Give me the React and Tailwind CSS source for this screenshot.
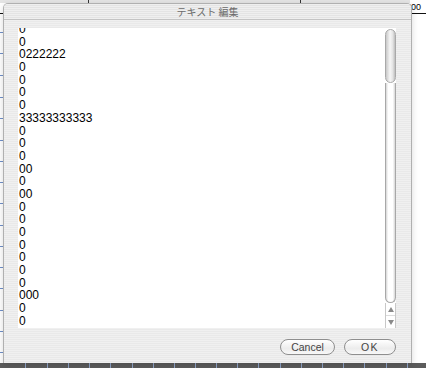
import React from "react";

const lines = [
  "0", "0", "0222222", "0", "0", "0", "0", "33333333333", "0", "0", "0", "00", "0", "00",
  "0", "0", "0", "0", "0", "0", "0", "000", "0", "0",
];

const leftTicks = [32, 53, 75, 97, 118, 140, 161, 182, 203, 225, 246, 267, 288, 310, 331, 352];
const bottomTicks = [25, 47, 68, 89, 110, 132, 153, 174, 195, 216, 237, 258, 280, 301, 322, 343, 364, 386, 407];

export default function App() {
  return (
    <div className="relative w-[426px] h-[368px] overflow-hidden bg-white font-['Liberation_Sans',sans-serif]">
      {/* background canvas */}
      <div className="absolute left-0 top-0 w-[410px] h-[3px] bg-[#e4e4e4]" />
      <div className="absolute left-[88px] top-0 w-[1px] h-[3px] bg-[#333]" />
      <div className="absolute left-[300px] top-0 w-[1px] h-[3px] bg-[#333]" />
      <div className="absolute left-0 top-[13px] w-[426px] h-[1px] bg-[#111]" />
      <div className="absolute left-[411px] top-[2px] text-[9px] leading-[10px] text-black">00</div>
      {leftTicks.map((y) => (
        <div key={y} className="absolute left-0 w-[3px] h-[1px] bg-[#6f8fc8]" style={{ top: y }} />
      ))}
      <div className="absolute left-0 top-[363px] w-[426px] h-[5px] bg-[#5c5c5c]" />
      {bottomTicks.map((x) => (
        <div key={x} className="absolute top-[363px] w-[1px] h-[5px] bg-[#8fa4c8]" style={{ left: x }} />
      ))}

      {/* dialog window */}
      <div className="absolute left-[3px] top-[3px] w-[409px] h-[360px] flex flex-col rounded-t-[5px] border-x border-t border-[#b0b0b0] overflow-hidden shadow-[0_2px_6px_rgba(0,0,0,0.15)] bg-[repeating-linear-gradient(to_bottom,#f0f0f0_0px,#f0f0f0_1px,#e9e9e9_1px,#e9e9e9_2px)]">
        {/* title bar */}
        <div className="h-[16px] shrink-0 flex items-center justify-center border-b border-[#c4c4c4] bg-[repeating-linear-gradient(to_bottom,#efefef_0px,#efefef_1px,#e4e4e4_1px,#e4e4e4_2px)]">
          <span className="text-[10px] leading-[12px] text-[#6a6a6a] font-['Noto_Sans_CJK_JP',sans-serif] mt-[1px]">
            テキスト 編集
          </span>
        </div>

        {/* body */}
        <div className="flex-1 flex flex-col pl-[14px] pr-[15px] pt-[8px]">
          <div className="h-[300px] flex bg-white">
            <div className="flex-1 overflow-hidden pl-[1px]">
              <div className="mt-[-5px] text-[12px] leading-[12.68px] text-black">
                {lines.map((t, i) => (
                  <div key={i}>{t}</div>
                ))}
              </div>
            </div>
            {/* scrollbar */}
            <div className="w-[11px] flex flex-col pt-[1px]">
              <div className="h-[54px] rounded-full border border-[#a9a9a9] bg-[linear-gradient(to_right,#c8c8c8,#f6f6f6_45%,#e4e4e4_75%,#bdbdbd)]" />
              <div className="flex-1 rounded-b-full border border-[#a8a8a8] border-t-0 bg-[linear-gradient(to_right,#d6d6d6,#ffffff_25%,#ffffff_75%,#d6d6d6)]" />
              <div className="h-[25px] flex flex-col border-x border-[#c8c8c8]">
                <div className="flex-1 flex items-center justify-center border-b border-[#dcdcdc]">
                  <div className="w-0 h-0 border-x-[3px] border-x-transparent border-b-[5px] border-b-[#8a8a8a]" />
                </div>
                <div className="flex-1 flex items-center justify-center">
                  <div className="w-0 h-0 border-x-[3px] border-x-transparent border-t-[5px] border-t-[#8a8a8a]" />
                </div>
              </div>
            </div>
          </div>

          {/* buttons */}
          <div className="flex justify-end gap-[9px] mt-[11px] pr-[0px]">
            <button className="w-[55px] h-[16px] rounded-full border border-[#8e8e8e] bg-[linear-gradient(to_bottom,#ffffff,#ececec_60%,#f8f8f8)] text-[10.5px] leading-[14px] text-[#444] flex items-center justify-center">
              Cancel
            </button>
            <button className="w-[52px] h-[16px] rounded-full border border-[#8e8e8e] bg-[linear-gradient(to_bottom,#ffffff,#ececec_60%,#f8f8f8)] text-[10.5px] leading-[14px] text-[#444] flex items-center justify-center tracking-[1.5px]">
              OK
            </button>
          </div>
        </div>
      </div>
    </div>
  );
}
